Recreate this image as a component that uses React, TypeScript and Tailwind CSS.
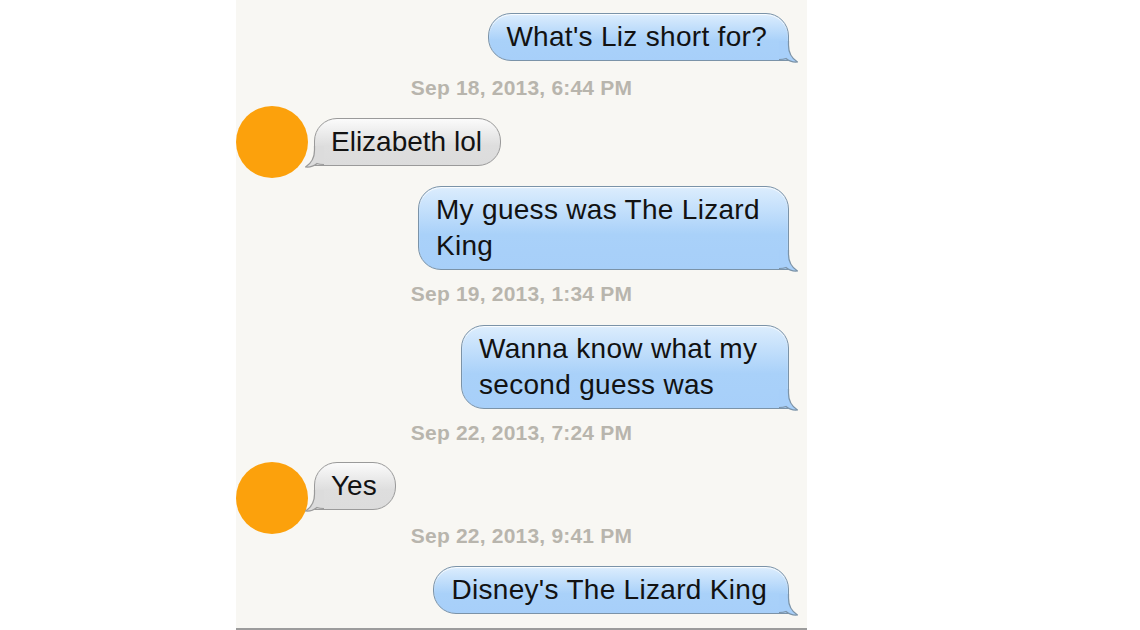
import React from 'react';

const FONT = { fontFamily: '"Liberation Sans", Arial, Helvetica, sans-serif' };

const TAIL_EDGE = 'M12.5 4 L12.5 8 C12.5 16 15 21 21.5 25 C17 25.5 13 24 10 21.5 C7.5 22.5 5.5 22.5 3 22.5';

const Tail = ({ side, color, stroke }: { side: 'left' | 'right'; color: string; stroke: string }) => (
    <svg
        width="22"
        height="26"
        viewBox="0 0 22 26"
        className={side === 'right' ? 'absolute right-[-10px] bottom-[-3px]' : 'absolute left-[-10px] bottom-[-3px] -scale-x-100'}
    >
        <path d={`${TAIL_EDGE} L3 4 Z`} fill={color} />
        <path d={TAIL_EDGE} fill="none" stroke={stroke} strokeWidth="1.2" />
    </svg>
);

const Sent = ({ children, width }: { children: React.ReactNode; width?: string }) => (
    <div className="flex justify-end pr-[18px]">
        <div
            className={`relative rounded-[23px] rounded-br-none border border-[#7b93a8] bg-gradient-to-b from-[#dcedfd] via-[#a9d1f9] via-[58%] to-[#a7cff9] pl-[17px] pr-[21px] py-[5px] text-[28px] leading-[36px] tracking-[0.3px] text-[#121212] shadow-[inset_0_1px_1px_rgba(255,255,255,0.9)] ${width ?? ''}`}
        >
            {children}
            <Tail side="right" color="#a7cff9" stroke="#7b93a8" />
        </div>
    </div>
);

const Received = ({ children, className }: { children: React.ReactNode; className?: string }) => (
    <div
        className={`relative ml-[6px] rounded-[23px] rounded-bl-none border border-[#9a9a9a] bg-gradient-to-b from-[#fbfbfb] via-[#dedede] via-[58%] to-[#dcdcdc] pl-[16px] pr-[18px] py-[5px] text-[28px] leading-[36px] text-[#121212] ${className ?? ''}`}
    >
        {children}
        <Tail side="left" color="#dcdcdc" stroke="#9a9a9a" />
    </div>
);

const Stamp = ({ text, className }: { text: string; className?: string }) => (
    <div className={`text-center text-[21px] leading-[24px] font-bold text-[#b8b5ad] tracking-[0.2px] ${className ?? ''}`}>{text}</div>
);

const Avatar = () => <div className="w-[72px] h-[72px] shrink-0 rounded-full bg-[#fca10c]" />;

export default function App() {
    return (
        <div className="min-h-screen w-full bg-white" style={FONT}>
            <div className="ml-[236px] w-[571px] h-[630px] bg-[#f8f7f3] border-b-2 border-[#9c9c9c] overflow-hidden">
                <div className="pt-[13px]">
                    <Sent>What's Liz short for?</Sent>
                </div>

                <Stamp text="Sep 18, 2013, 6:44 PM" className="mt-[15px]" />

                <div className="flex items-start mt-[6px]">
                    <Avatar />
                    <Received className="mt-[12px]">Elizabeth lol</Received>
                </div>

                <div className="mt-[8px]">
                    <Sent width="w-[371px]">
                        My guess was The Lizard
                        <br />
                        King
                    </Sent>
                </div>

                <Stamp text="Sep 19, 2013, 1:34 PM" className="mt-[12px]" />

                <div className="mt-[19px]">
                    <Sent width="w-[328px]">
                        Wanna know what my
                        <br />
                        second guess was
                    </Sent>
                </div>

                <Stamp text="Sep 22, 2013, 7:24 PM" className="mt-[12px]" />

                <div className="flex items-start mt-[17px] h-[62px]">
                    <Avatar />
                    <Received>Yes</Received>
                </div>

                <Stamp text="Sep 22, 2013, 9:41 PM" />

                <div className="mt-[18px]">
                    <Sent>Disney's The Lizard King</Sent>
                </div>
            </div>
        </div>
    );
}
